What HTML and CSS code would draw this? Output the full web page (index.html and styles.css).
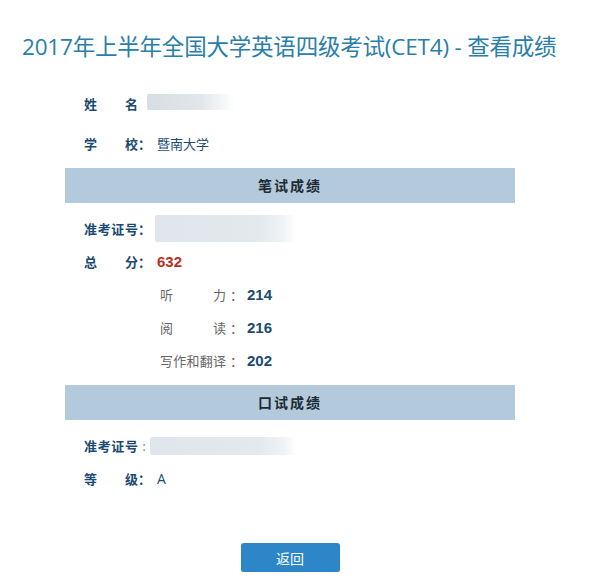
FILE: index.html
```html
<!DOCTYPE html>
<html lang="zh">
<head>
<meta charset="utf-8">
<title>查看成绩</title>
<link rel="stylesheet" href="styles.css">
</head>
<body>
<h1 class="title">2017年上半年全国大学英语四级考试(CET4) - 查看成绩</h1>
<div class="content">
  <div class="row tall">
    <span class="lab">姓名</span><span class="blur blur-name"></span>
  </div>
  <div class="row tall">
    <span class="lab">学校</span><span class="colon">：</span><span class="val">暨南大学</span>
  </div>
  <div class="bar">笔试成绩</div>
  <div class="rows-block">
    <div class="row">
      <span class="lab">准考证号</span><span class="colon">：</span><span class="blur blur-id"></span>
    </div>
    <div class="row">
      <span class="lab">总分</span><span class="colon">：</span><span class="num red">632</span>
    </div>
    <div class="row sub">
      <span class="slab">听力</span><span class="scolon">：</span><span class="num">214</span>
    </div>
    <div class="row sub">
      <span class="slab">阅读</span><span class="scolon">：</span><span class="num">216</span>
    </div>
    <div class="row sub">
      <span class="slab">写作和翻译</span><span class="scolon">：</span><span class="num">202</span>
    </div>
  </div>
  <div class="bar bar2">口试成绩</div>
  <div class="rows-block">
    <div class="row">
      <span class="lab">准考证号</span><span class="colon thin">:</span><span class="blur blur-id2"></span>
    </div>
    <div class="row">
      <span class="lab">等级</span><span class="colon">：</span><span class="val grade">A</span>
    </div>
  </div>
  <div class="actions">
    <button class="btn" type="button">返回</button>
  </div>
</div>
</body>
</html>
```
FILE: styles.css
```css
body {
  margin: 0;
  background: #ffffff;
  font-family: "Noto Sans CJK SC", "Liberation Sans", sans-serif;
}
.title {
  margin: 0;
  padding: 33px 0 0 22px;
  font-size: 22.5px;
  line-height: 28px;
  font-weight: normal;
  color: #2a7eaa;
  font-family: "Open Sans", "Noto Sans CJK SC", sans-serif;
  letter-spacing: -0.2px;
  white-space: nowrap;
}
.content {
  margin: 22px 0 0 65px;
  width: 450px;
}
.row {
  display: flex;
  align-items: center;
  height: 33px;
  padding-left: 19px;
  font-size: 13px;
}
.row.tall {
  height: 40px;
}
.lab {
  width: 54px;
  text-align-last: justify;
  font-weight: bold;
  color: #1b4a73;
}
.colon {
  width: 19px;
  font-weight: bold;
  color: #1b4a73;
}
.colon.thin {
  width: 12px;
  text-align: center;
  font-weight: normal;
  color: #7a8a96;
}
.val {
  color: #1b4a73;
  font-size: 13px;
}
.grade {
  font-family: "Open Sans", sans-serif;
  font-size: 14px;
  color: #1b4a73;
}
.num {
  font-family: "Liberation Sans", sans-serif;
  font-weight: bold;
  font-size: 15px;
  color: #1b4a73;
}
.num.red {
  color: #b8321e;
}
.sub {
  padding-left: 95px;
}
.slab {
  width: 66px;
  text-align-last: justify;
  color: #666666;
}
.scolon {
  width: 21px;
  color: #666666;
  text-align: center;
}
.blur {
  display: block;
  background: linear-gradient(to right, #d7dee4 0%, #e1e6ea 60%, #f3f5f7 85%, #ffffff 100%);
  border-radius: 2px;
}
.blur-name {
  width: 88px;
  height: 16px;
  margin-left: 9px;
  margin-top: -2px;
}
.blur-id {
  width: 140px;
  height: 27px;
  margin-left: -2px;
  background: linear-gradient(to right, #dfe5ea 0%, #e4e9ed 75%, #f0f3f5 92%, #ffffff 100%);
}
.blur-id2 {
  width: 146px;
  height: 18px;
  background: linear-gradient(to right, #dfe5ea 0%, #e4e9ed 75%, #f0f3f5 92%, #ffffff 100%);
}
.bar {
  margin-top: 5px;
  height: 35px;
  line-height: 35px;
  background: #b3cadd;
  text-align: center;
  font-size: 14px;
  font-weight: bold;
  color: #1e2a33;
  letter-spacing: 2px;
}
.bar2 {
  margin-top: 8px;
}
.rows-block {
  margin-top: 9px;
}
.actions {
  display: flex;
  justify-content: center;
  margin-top: 48px;
}
.btn {
  width: 99px;
  height: 29px;
  border: none;
  border-radius: 3px;
  background: #2c86c7;
  color: #ffffff;
  font-size: 14px;
  font-family: "Noto Sans CJK SC", sans-serif;
  padding: 0;
  box-shadow: 0 1px 1px rgba(0, 0, 0, 0.25);
}
```
